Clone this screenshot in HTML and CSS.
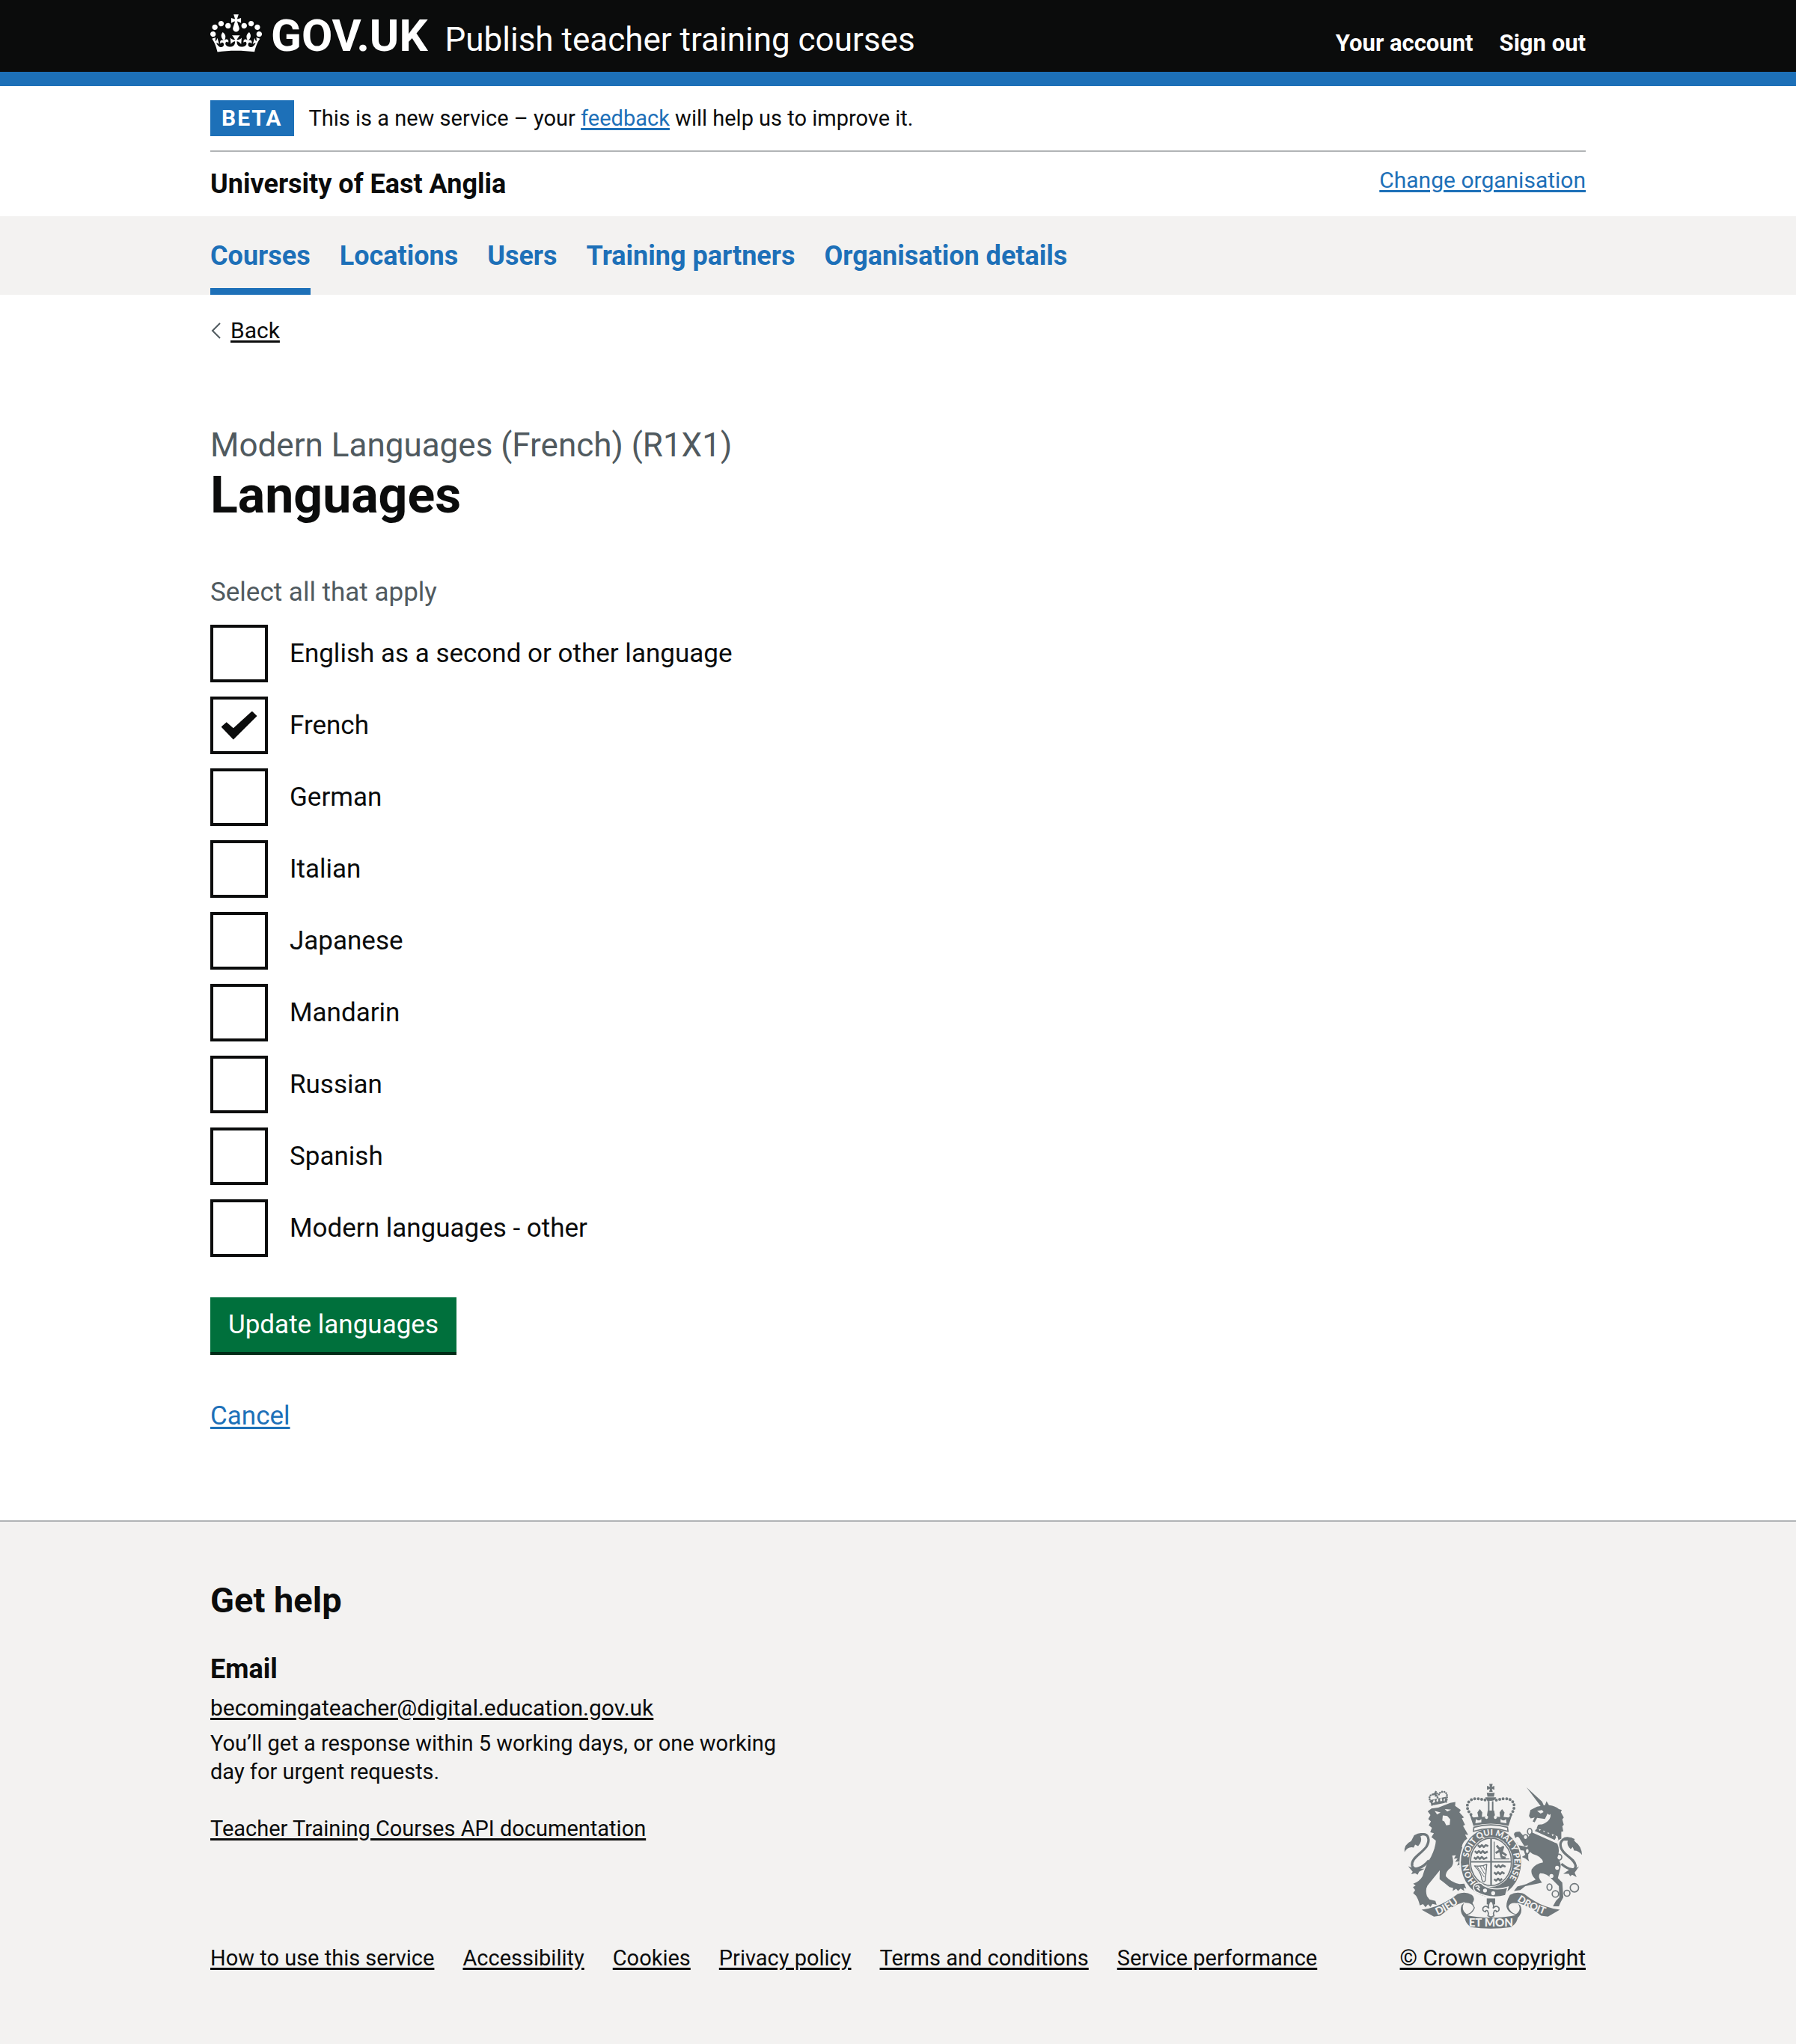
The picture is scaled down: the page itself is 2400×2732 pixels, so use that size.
FILE: index.html
```html
<!DOCTYPE html>
<html lang="en">
<head>
<meta charset="utf-8">
<meta name="viewport" content="width=device-width, initial-scale=1">
<title>Languages – Publish teacher training courses – GOV.UK</title>
<link rel="stylesheet" href="styles.css">
</head>
<body>
<header class="header">
  <div class="container header-row">
    <a class="logo" href="#">
      <svg class="crown" viewBox="0 0 132 97" aria-hidden="true"><path fill="currentColor" fill-rule="evenodd" d="M25 30.2c3.5 1.5 7.7-.2 9.1-3.7 1.5-3.6-.2-7.8-3.9-9.2-3.6-1.4-7.6.3-9.1 3.9-1.4 3.5.3 7.5 3.9 9zM9 39.5c3.6 1.5 7.8-.2 9.2-3.7 1.5-3.6-.2-7.8-3.9-9.1-3.6-1.5-7.6.2-9.1 3.8-1.4 3.5.3 7.5 3.8 9zM4.4 57.2c3.5 1.5 7.7-.2 9.1-3.8 1.5-3.6-.2-7.7-3.9-9.1-3.5-1.5-7.6.3-9.1 3.8-1.4 3.5.3 7.6 3.9 9.1zm38.3-21.4c3.5 1.5 7.7-.2 9.1-3.8 1.5-3.6-.2-7.7-3.9-9.1-3.6-1.5-7.6.3-9.1 3.8-1.3 3.6.4 7.7 3.9 9.1zm64.4-5.6c-3.6 1.5-7.8-.2-9.1-3.7-1.5-3.6.2-7.8 3.8-9.2 3.6-1.4 7.7.3 9.2 3.9 1.3 3.5-.4 7.5-3.9 9zm15.9 9.3c-3.6 1.5-7.7-.2-9.1-3.7-1.5-3.6.2-7.8 3.7-9.1 3.6-1.5 7.7.2 9.2 3.8 1.5 3.5-.3 7.5-3.8 9zm4.7 17.7c-3.6 1.5-7.8-.2-9.2-3.8-1.5-3.6.2-7.7 3.9-9.1 3.6-1.5 7.7.3 9.2 3.8 1.3 3.5-.4 7.6-3.9 9.1zM89.3 35.8c-3.6 1.5-7.8-.2-9.2-3.8-1.4-3.6.2-7.7 3.9-9.1 3.6-1.5 7.7.3 9.2 3.8 1.4 3.6-.3 7.7-3.9 9.1zM69.7 17.7l8.9 4.7V9.3l-8.9 2.8c-.2-.3-.5-.6-.9-.9L72.4 0H59.6l3.5 11.2c-.3.3-.6.5-.9.9l-8.8-2.8v13.1l8.8-4.7c.3.3.6.7.9.9l-5 15.4v.1c-.2.8-.4 1.6-.4 2.4 0 4.1 3.1 7.5 7 8.1h.2c.3 0 .7.1 1 .1.4 0 .7 0 1-.1h.2c4-.6 7.1-4.1 7.1-8.1 0-.8-.1-1.7-.4-2.4V34l-5.1-15.4c.4-.2.7-.6 1-.9zM66 92.8c16.9 0 32.8 1.1 47.1 3.2 4-16.9 8.9-26.7 14-33.5l-9.6-3.4c1 4.9 1.1 7.2 0 10.2-1.5-1.4-3-4.3-4.2-8.7L108.6 76c2.8-2 5-3.2 7.5-3.3-4.4 9.4-10 11.9-13.6 11.2-4.3-.8-6.3-4.6-5.6-7.9 1-4.7 5.7-5.9 8-.5 4.3-8.7-3-11.4-7.6-8.8 7.1-7.2 7.9-13.5 2.1-21.1-8 6.1-8.1 12.3-4.5 20.8-4.7-5.4-12.1-2.5-9.5 6.2 3.4-5.2 7.9-2 7.2 3.1-.6 4.3-6.4 7.8-13.5 7.2-10.3-.9-10.9-8-11.2-13.8 2.5-.5 7.1 1.8 11 7.3L80.2 60c-4.1 4.4-8 5.3-12.3 5.4 1.4-4.4 8-11.6 8-11.6H55.5s6.4 7.2 7.9 11.6c-4.2-.1-8-1-12.3-5.4l1.4 16.4c3.9-5.5 8.5-7.7 10.9-7.3-.3 5.8-.9 12.8-11.1 13.8-7.2.6-12.9-2.9-13.5-7.2-.7-5 3.8-8.3 7.1-3.1 2.7-8.7-4.6-11.6-9.4-6.2 3.7-8.5 3.6-14.7-4.6-20.8-5.8 7.6-5 13.9 2.2 21.1-4.7-2.6-11.9.1-7.7 8.8 2.3-5.5 7.1-4.2 8.1.5.7 3.3-1.3 7.1-5.7 7.9-3.5.7-9-1.8-13.5-11.2 2.5.1 4.7 1.3 7.5 3.3l-4.7-15.4c-1.2 4.4-2.7 7.2-4.3 8.7-1.1-3-.9-5.3 0-10.2l-9.5 3.4c5 6.9 9.9 16.7 14 33.6 14.8-2.1 30.8-3.2 47.7-3.2z"/></svg>
      <span class="logo-text">GOV.UK</span>
    </a>
    <a class="service-name" href="#">Publish teacher training courses</a>
    <nav class="account-nav" aria-label="Account">
      <a href="#">Your account</a>
      <a href="#">Sign out</a>
    </nav>
  </div>
</header>

<div class="container">
  <div class="phase-banner">
    <strong class="tag">BETA</strong>
    <span>This is a new service – your <a class="link" href="#">feedback</a> will help us to improve it.</span>
  </div>
  <div class="organisation">
    <strong class="organisation-name">University of East Anglia</strong>
    <a class="link wide" href="#">Change organisation</a>
  </div>
</div>

<nav class="primary-nav" aria-label="Primary">
  <ul class="container primary-nav-list">
    <li><a class="current" href="#" aria-current="page">Courses</a></li>
    <li><a href="#">Locations</a></li>
    <li><a href="#">Users</a></li>
    <li><a href="#">Training partners</a></li>
    <li><a href="#">Organisation details</a></li>
  </ul>
</nav>

<div class="container content">
  <div class="back">
    <svg class="chevron" viewBox="0 0 14 22" aria-hidden="true"><path d="M13 1 3 11l10 10" fill="none" stroke="#505a5f" stroke-width="2"/></svg>
    <a class="link dark wide" href="#">Back</a>
  </div>
  <main class="main">
    <form>
      <fieldset aria-describedby="languages-hint">
        <legend>
          <span class="caption">Modern Languages (French) (R1X1)</span>
          <h1>Languages</h1>
        </legend>
        <p class="hint" id="languages-hint">Select all that apply</p>
        <div class="checkboxes">
          <label class="checkbox"><input type="checkbox"><span>English as a second or other language</span></label>
          <label class="checkbox"><input type="checkbox" checked><span>French</span></label>
          <label class="checkbox"><input type="checkbox"><span>German</span></label>
          <label class="checkbox"><input type="checkbox"><span>Italian</span></label>
          <label class="checkbox"><input type="checkbox"><span>Japanese</span></label>
          <label class="checkbox"><input type="checkbox"><span>Mandarin</span></label>
          <label class="checkbox"><input type="checkbox"><span>Russian</span></label>
          <label class="checkbox"><input type="checkbox"><span>Spanish</span></label>
          <label class="checkbox"><input type="checkbox"><span>Modern languages - other</span></label>
        </div>
      </fieldset>
      <button class="button" type="button">Update languages</button>
    </form>
    <p class="cancel"><a class="link" href="#">Cancel</a></p>
  </main>
</div>

<footer class="footer">
  <div class="container footer-row">
    <div class="footer-main">
      <h2>Get help</h2>
      <div class="help">
        <h3>Email</h3>
        <p><a class="link dark wide" href="#">becomingateacher@digital.education.gov.uk</a></p>
        <p>You’ll get a response within 5 working days, or one working day for urgent requests.</p>
        <p class="api"><a class="link dark" href="#">Teacher Training Courses API documentation</a></p>
      </div>
      <ul class="footer-links">
        <li><a class="link dark" href="#">How to use this service</a></li>
        <li><a class="link dark" href="#">Accessibility</a></li>
        <li><a class="link dark" href="#">Cookies</a></li>
        <li><a class="link dark" href="#">Privacy policy</a></li>
        <li><a class="link dark" href="#">Terms and conditions</a></li>
        <li><a class="link dark" href="#">Service performance</a></li>
      </ul>
    </div>
    <div class="copyright">
      <svg class="arms" viewBox="98 66 726 594" fill="#6f777b" aria-hidden="true">
        <!-- lion -->
        <path d="M197 181 212 170 240 166 288 147 309 143 308 159 331 176 325 185 344 206 335 209 348 236 340 240 361 277 348 275 357 292Q338 305 335 325L352 350 370 396 366 412 352 400 345 414 338 402 326 411 330 396 316 401 324 384 308 386 318 372 303 373 311 359 296 361Q306 395 290 410 270 424 270 444 290 468 326 476L345 474 353 494 342 490 345 504 330 494 320 504 312 495 298 504 300 492 285 488Q262 468 245 456 245 434 246 420L196 482Q186 500 194 525L204 538 228 544 233 560 216 556 208 568 198 558 188 570 178 557 165 562Q160 540 150 524L138 512 146 500 137 488 148 482 138 474Q164 466 176 444 188 400 210 366 228 330 230 300L212 286 222 270 207 266 214 248 201 238 210 222 199 212 208 196Z"/>
        <path fill="#f3f2f1" d="M225 180l24 6-14 8zM266 172l26 2-16 8zM258 198l18 2 12 14-2 22-14 2-8-16-8-4z"/>
        <path d="M212 160 207 136 272 122 276 146Q242 142 212 160Z"/>
        <path fill="#f3f2f1" d="M216 148l6-16 8 12 6-18 7 15 9-18 4 16 12-12-3 14Q240 138 216 148Z"/>
        <path d="M222 150l8-14 6 10 8-16 6 13 10-10 6 14-44 9zM228 98l6 3-2 6 7-2-1 8-6-2 2 10-8 1-1-9-6 4-2-8 6-1z"/>
        <g fill="none" stroke="#6f777b" stroke-width="8" stroke-linecap="round" stroke-dasharray="0 9"><path d="M208 142Q196 116 220 112 234 110 238 130M274 134Q280 100 256 102 242 104 240 122"/></g>
        <path d="M103 346Q100 316 130 302L142 278Q166 264 186 272L168 282Q176 304 158 322L146 316 140 328Q118 322 103 346Z"/>
        <path d="M165 276C204 266 206 300 192 324 168 356 128 372 134 402 140 424 176 412 202 380" fill="none" stroke="#6f777b" stroke-width="10"/>
        <path d="M118 404 136 410 160 414 184 414 162 426 156 438 146 432 130 436 136 426Z"/>
        <!-- unicorn -->
        <path d="M597 84 660 142 668 160 656 162Z"/>
        <path d="M607 200 613 176 640 162 672 156 678 140 688 156Q716 160 728 172L740 176 736 184 748 206 742 214 748 236 742 242 746 262 738 264 738 292 722 300 632 262 644 236Q680 232 694 200L682 190 672 212 640 208 630 226 622 222 630 206 614 210Z"/>
        <path fill="#f3f2f1" d="M640 180l20-4 6 8-12 6zM676 206l18-14q4 28-34 42l-22-2q30-8 38-26z"/>
        <path d="M622 272Q612 300 614 316L588 322 572 296Q562 276 552 290L546 274Q548 262 570 264L596 294 618 266 722 312Q734 340 722 370 742 392 732 420L724 452 742 470 746 530 736 548 728 566 704 566 716 544 730 530 728 484 700 456Q680 432 652 432 640 446 660 470L640 474 592 484 572 500 546 504 560 486 596 476 634 458Q612 436 618 416 632 394 664 388 660 364 622 354L604 340 604 372 608 384 592 372 578 366 592 358 586 340 566 338Q548 330 544 308L558 306 564 318 600 326Z"/>
        <path fill="#f3f2f1" d="M632 246 722 282 726 296 714 308 632 268Z"/>
        <path d="M634 256l10-10 6 14 12-10 5 16 13-8 4 15 14-8 3 16 12-6 4 12-6 10-80-36z"/>
        <g fill="#f3f2f1"><circle cx="721" cy="410" r="8"/><circle cx="698" cy="443" r="8"/></g>
        <g fill="none" stroke="#6f777b" stroke-width="5"><ellipse cx="610" cy="263" rx="9" ry="12"/><ellipse cx="593" cy="286" rx="9" ry="10" fill="#f3f2f1"/><ellipse cx="600" cy="342" rx="8" ry="11" fill="#f3f2f1"/><circle cx="728" cy="367" r="12"/><ellipse cx="690" cy="488" rx="10" ry="13"/><circle cx="714" cy="516" r="13"/><circle cx="761" cy="513" r="12"/><circle cx="791" cy="491" r="17"/></g>
        <path d="M790 298C746 276 730 306 736 326 744 360 790 368 796 402 796 424 770 420 738 394" fill="none" stroke="#6f777b" stroke-width="10"/>
        <path d="M822 358Q820 322 796 306L780 288Q754 286 744 300L764 300Q758 318 776 334L784 326 790 340Q808 340 822 358ZM810 404 796 412 772 416 746 434 768 434 774 444 782 438 800 448 792 430Z"/>
        <!-- royal crown -->
        <path d="M446 70h14l-3 12 10-4v16l-10-4 3 12h-14l3-12-12 4v-16l12 4zM436 106h32l-3 16h-26zM430 124h44q-2 14-22 15-20-1-22-15zM441 140h6v38h-6zM457 140h6v38h-6z"/>
        <g fill="none" stroke="#6f777b" stroke-width="12" stroke-linecap="round" stroke-dasharray="0 14"><path d="M372 194C342 160 362 130 392 130 420 130 432 140 446 134M534 194C560 160 544 130 514 130 486 130 474 140 462 134"/></g>
        <path d="M366 190 382 206 402 204 398 186 408 172 418 186 416 204 436 202 440 178H466L470 202 490 204 488 186 498 172 508 186 504 204 524 206 540 190 524 240Q452 222 382 240Z"/>
        <path fill="#f3f2f1" d="M392 212q12 12 22 0v14l-24 4zM492 212q12 12 22 0l2 18-24-4zM428 208q10 10 14-4l-6-8zM478 208q-10 10-14-4l6-8z"/>
        <!-- garter and shield -->
        <ellipse cx="453" cy="389" rx="128" ry="144" fill="#f3f2f1"/>
        <ellipse cx="453" cy="389" rx="122" ry="139"/>
        <path d="M384 246Q452 226 520 246L522 262Q452 240 382 262Z" fill="#f3f2f1" stroke="#6f777b" stroke-width="5"/>
        <ellipse cx="453" cy="386" rx="88" ry="101" fill="#f3f2f1"/>
        <ellipse cx="453" cy="386" rx="83" ry="96" fill="none" stroke="#6f777b" stroke-width="5"/>
        <path d="M450 292h7v188h-7zM372 383h162v6H372z"/>
        <g fill="none" stroke="#6f777b" stroke-width="8" stroke-linejoin="round">
          <path d="M400 318l8 8 8-8 8 8 8-8 10 4M388 342l8 8 8-8 8 8 8-8 8 8 12-6M384 368l8 6 8-8 8 8 8-8 8 8 14-6M468 400l8 8 8-8 8 8 8-8 12 6M466 428l8 8 8-8 8 8 8-8 10 6M466 456l8 6 8-8 8 8 8-8"/>
          <path d="M476 320l12 14 14-8-6 20 20 14M472 350l18-10 6 26 16 4" stroke-width="9"/>
          <path d="M466 304v70h62M386 402q30 4 50-6l-6 66q-8 12-14-4-2-30-30-56z" stroke-width="4"/>
          <path d="M396 404l30 44M408 402l20 34M420 400l10 20" stroke-width="3"/>
        </g>
        <path id="garter-motto" d="M393 467A93 108 0 1 1 512 471" fill="none"/>
        <text fill="#f3f2f1" font-family="Lato, sans-serif" font-weight="900" font-size="34"><textPath href="#garter-motto">HON&#8195;SOIT QUI MAL Y PENSE</textPath></text>
        <path d="M386 478Q408 462 424 482 470 506 522 488L512 522Q452 540 392 508 376 494 386 478Z" stroke="#f3f2f1" stroke-width="5"/>
        <circle cx="429" cy="502" r="8" fill="#f3f2f1"/><circle cx="462" cy="513" r="8" fill="#f3f2f1"/>
        <path d="M390 486q14-8 16 4l-8 4 10 8" fill="none" stroke="#f3f2f1" stroke-width="5"/>
        <!-- fleur and ribbons -->
        <path d="M436 534h34v24h-34z"/>
        <path d="M453 542q16 18 8 32 14-16 24-2 4 14-10 16-2-8-8-4l-4 10 2 10-12 6-12-6 2-10-4-10q-6-4-8 4-14-2-10-16 10-14 24 2-8-14 8-32z" fill="#f3f2f1" stroke="#6f777b" stroke-width="5"/>
        <path d="M172 580Q250 570 318 516 350 504 376 520 392 534 378 552L388 572Q378 596 360 600L346 612Q324 590 334 562L348 548Q300 560 248 604L222 608Z"/>
        <path d="M344 552Q376 548 384 572 374 594 354 598 330 580 344 552Z" fill="#f3f2f1"/>
        <path d="M732 580Q654 570 588 516 556 504 530 520 514 548 516 568 520 590 550 600L562 612Q584 590 572 562L556 552Q610 562 656 604L684 608Z"/>
        <path d="M562 554Q530 548 524 568 530 590 554 598 580 580 562 554Z" fill="#f3f2f1"/>
        <path d="M346 600Q452 624 562 600 564 630 536 650 452 662 370 650 344 630 346 600Z"/>
        <path id="ribbon-left" d="M236 602Q284 584 340 538" fill="none"/>
        <path id="ribbon-right" d="M558 543Q612 582 690 606" fill="none"/>
        <g fill="#f3f2f1" font-family="Lato, sans-serif" font-weight="900">
          <text font-size="42"><textPath href="#ribbon-left">DIEU</textPath></text>
          <text font-size="40"><textPath href="#ribbon-right">DROIT</textPath></text>
          <text font-size="46" x="453" y="648" text-anchor="middle">ET MON</text>
        </g>
      </svg>
      <a class="link dark wide" href="#">© Crown copyright</a>
    </div>
  </div>
</footer>
</body>
</html>
```
FILE: styles.css
```css
* {
  box-sizing: border-box;
}

body {
  margin: 0;
  min-height: 100vh;
  display: flex;
  flex-direction: column;
  background: #fff;
  color: #0b0c0c;
  font-family: Roboto, "Liberation Sans", sans-serif;
  font-size: 29px;
  line-height: 38px;
}

h1, h2, h3, p, ul, fieldset, legend {
  margin: 0;
  padding: 0;
}

ul {
  list-style: none;
}

fieldset {
  border: 0;
}

.container {
  width: 100%;
  max-width: 1838px;
  margin: 0 auto;
}

.link {
  color: #1d70b8;
  text-decoration: underline;
  text-decoration-thickness: 3px;
  text-underline-offset: 3px;
}

.link.dark {
  color: #0b0c0c;
}

.link.wide {
  font-size: 30px;
}

/* Header */
.header {
  padding: 19px 0;
  border-bottom: 19px solid #1d70b8;
  background: #0b0c0c;
}

.header a {
  color: #fff;
  text-decoration: none;
}

.header-row {
  display: flex;
  align-items: baseline;
}

.logo {
  display: flex;
  align-items: baseline;
  gap: 12px;
  margin-right: 23px;
}

.crown {
  align-self: flex-start;
  width: 69px;
  height: 51px;
}

.logo-text {
  font-size: 60px;
  line-height: 58px;
  font-weight: 700;
}

.service-name {
  font-size: 44px;
  line-height: 46px;
}

.account-nav {
  display: flex;
  gap: 35px;
  margin-left: auto;
  font-size: 31px;
  line-height: 36px;
  font-weight: 700;
}

/* Phase banner and organisation */
.phase-banner {
  display: flex;
  align-items: center;
  gap: 20px;
  padding: 19px 0;
  border-bottom: 2px solid #b1b4b6;
}

.tag {
  padding: 5px 15px;
  background: #1d70b8;
  color: #fff;
  font-size: 30px;
  letter-spacing: 2px;
}

.organisation {
  display: flex;
  justify-content: space-between;
  padding: 19px 0;
}

.organisation-name {
  font-size: 36px;
  line-height: 48px;
}

/* Primary navigation */
.primary-nav {
  background: #f3f2f1;
}

.primary-nav-list {
  display: flex;
  gap: 39px;
}

.primary-nav-list a {
  display: block;
  padding: 29px 0 19px;
  border-bottom: 9px solid transparent;
  color: #1d70b8;
  font-size: 36px;
  line-height: 48px;
  font-weight: 700;
  text-decoration: none;
}

.primary-nav-list .current {
  border-color: #1d70b8;
}

/* Page content */
.content {
  flex: 1;
}

.back {
  display: flex;
  align-items: center;
  gap: 13px;
  padding-top: 29px;
}

.chevron {
  width: 14px;
  height: 22px;
}

.main {
  padding: 105px 0 114px;
  font-size: 35px;
  line-height: 48px;
}

.caption {
  display: block;
  color: #505a5f;
  font-size: 44px;
  line-height: 58px;
}

h1 {
  font-size: 68px;
  line-height: 77px;
}

.hint {
  margin-top: 67px;
  color: #505a5f;
}

.checkboxes {
  display: grid;
  gap: 19px;
  margin-top: 19px;
}

.checkbox {
  display: flex;
  align-items: center;
  gap: 29px;
}

.checkbox input {
  appearance: none;
  display: grid;
  place-items: center;
  width: 77px;
  height: 77px;
  margin: 0;
  border: 4px solid #0b0c0c;
  background: #fff;
}

.checkbox input:checked::before {
  content: "";
  width: 48px;
  height: 38px;
  background: #0b0c0c;
  clip-path: polygon(0 55%, 15% 39%, 34% 60%, 86% 0, 100% 17%, 34% 100%);
}

.button {
  margin-top: 54px;
  padding: 13px 24px 12px;
  border: 0;
  border-bottom: 4px solid #002d18;
  background: #00703c;
  color: #fff;
  font: inherit;
}

.cancel {
  margin-top: 58px;
}

/* Footer */
.footer {
  padding: 76px 0 96px;
  border-top: 2px solid #b1b4b6;
  background: #f3f2f1;
}

.footer-row {
  display: flex;
  align-items: flex-end;
  justify-content: space-between;
}

h2 {
  font-size: 47px;
  line-height: 58px;
}

h3 {
  font-size: 36px;
  line-height: 48px;
}

.help {
  display: grid;
  gap: 9px;
  max-width: 785px;
  margin-top: 39px;
}

.api {
  margin-top: 29px;
}

.footer-links {
  display: flex;
  gap: 38px;
  margin-top: 135px;
}

.copyright {
  display: flex;
  flex-direction: column;
  align-items: center;
  gap: 19px;
}

.arms {
  width: 240px;
  height: 196px;
}
```
